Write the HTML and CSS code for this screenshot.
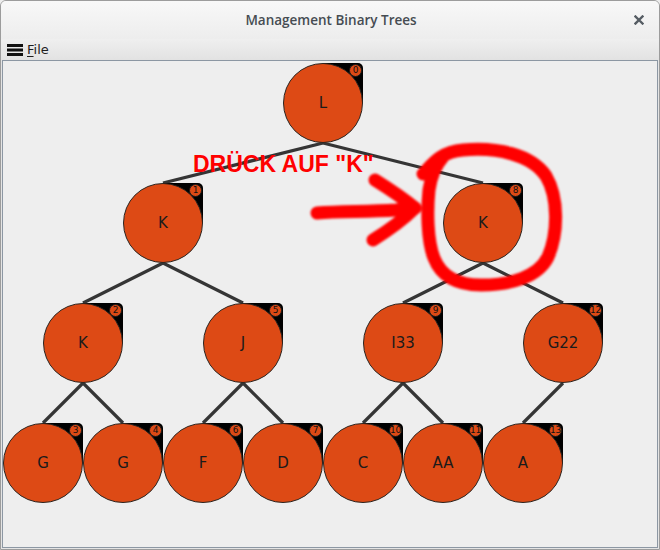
FILE: index.html
```html
<!DOCTYPE html>
<html>
<head>
<meta charset="utf-8">
<link rel="stylesheet" href="styles.css">
</head>
<body>
<div class="window">
  <div class="titlebar">
    <span class="title">Management Binary Trees</span>
    <svg class="close" width="10" height="10" viewBox="0 0 10 10"><path d="M1.5 1.5 L8.5 8.5 M8.5 1.5 L1.5 8.5" stroke="#555c63" stroke-width="2.4" stroke-linecap="square"/></svg>
  </div>
  <div class="menubar">
    <svg class="hamburger" width="16" height="12" viewBox="0 0 16 12"><rect x="0" y="0" width="16" height="3" fill="#111"/><rect x="0" y="4.5" width="16" height="3" fill="#111"/><rect x="0" y="9" width="16" height="3" fill="#111"/></svg>
    <span class="menu-item"><u>F</u>ile</span>
  </div>
  <div class="canvas">
    <svg class="edges" width="656" height="487" viewBox="2 61 656 487">
      <g stroke="#353535" stroke-width="3.2" stroke-linecap="butt">
        <line x1="322" y1="143" x2="162" y2="183"/>
        <line x1="322" y1="143" x2="482" y2="183"/>
        <line x1="162" y1="263" x2="82" y2="303"/>
        <line x1="162" y1="263" x2="242" y2="303"/>
        <line x1="482" y1="263" x2="402" y2="303"/>
        <line x1="482" y1="263" x2="562" y2="303"/>
        <line x1="82" y1="383" x2="42" y2="423"/>
        <line x1="82" y1="383" x2="122" y2="423"/>
        <line x1="242" y1="383" x2="202" y2="423"/>
        <line x1="242" y1="383" x2="282" y2="423"/>
        <line x1="402" y1="383" x2="362" y2="423"/>
        <line x1="402" y1="383" x2="442" y2="423"/>
        <line x1="562" y1="383" x2="522" y2="423"/>
      </g>
    </svg>

    <div class="node" style="left:280px;top:2px"><div class="circle">L</div><span class="badge">0</span></div>
    <div class="node" style="left:120px;top:122px"><div class="circle">K</div><span class="badge">1</span></div>
    <div class="node" style="left:440px;top:122px"><div class="circle">K</div><span class="badge">8</span></div>
    <div class="node" style="left:40px;top:242px"><div class="circle">K</div><span class="badge">2</span></div>
    <div class="node" style="left:200px;top:242px"><div class="circle">J</div><span class="badge">5</span></div>
    <div class="node" style="left:360px;top:242px"><div class="circle">I33</div><span class="badge">9</span></div>
    <div class="node" style="left:520px;top:242px"><div class="circle">G22</div><span class="badge">12</span></div>
    <div class="node" style="left:0px;top:362px"><div class="circle">G</div><span class="badge">3</span></div>
    <div class="node" style="left:80px;top:362px"><div class="circle">G</div><span class="badge">4</span></div>
    <div class="node" style="left:160px;top:362px"><div class="circle">F</div><span class="badge">6</span></div>
    <div class="node" style="left:240px;top:362px"><div class="circle">D</div><span class="badge">7</span></div>
    <div class="node" style="left:320px;top:362px"><div class="circle">C</div><span class="badge">10</span></div>
    <div class="node" style="left:400px;top:362px"><div class="circle">AA</div><span class="badge">11</span></div>
    <div class="node" style="left:480px;top:362px"><div class="circle">A</div><span class="badge">13</span></div>

    <div class="note">DRÜCK AUF "K"</div>
    <svg class="scribble" width="656" height="487" viewBox="2 61 656 487">
      <defs><filter id="soft" x="-10%" y="-10%" width="120%" height="120%"><feGaussianBlur stdDeviation="0.9"/></filter></defs>
      <g fill="none" stroke="#ff0000" stroke-width="13" stroke-linecap="round" stroke-linejoin="round" filter="url(#soft)">
        <path d="M316 213 C340 211, 365 212, 395 210 L414 208"/>
        <path d="M374 180 C390 190, 402 198, 414 208 C402 220, 388 230, 372 240"/>
        <path d="M422 174 C430 166, 438 152, 462 150 C495 147, 530 154, 545 176 C558 198, 557 234, 547 257 C537 277, 510 285, 480 285 C455 285, 440 276, 433 258 C426 240, 426 210, 428 190 C430 176, 434 166, 442 157"/>
      </g>
    </svg>
  </div>
</div>
</body>
</html>
```

FILE: styles.css
```css
* { box-sizing: border-box; }
html, body {
  margin: 0;
  padding: 0;
  background: #ededed;
}
.window {
  width: 660px;
  height: 550px;
  border: 1px solid #9c9c9c;
  border-radius: 6px 6px 0 0;
  background: #e4e4e4;
  display: flex;
  flex-direction: column;
  overflow: hidden;
}
.titlebar {
  height: 38px;
  flex: none;
  background: linear-gradient(#f8f8f8, #ededed);
  display: flex;
  align-items: center;
  justify-content: center;
  position: relative;
}
.title {
  font-family: "Open Sans", "DejaVu Sans", sans-serif;
  font-weight: 600;
  font-size: 13.5px;
  color: #464c52;
  margin-left: 2px;
}
.close {
  position: absolute;
  right: 15px;
  top: 14px;
}
.menubar {
  height: 21px;
  flex: none;
  background: linear-gradient(#efefef, #e2e2e2);
  display: flex;
  align-items: center;
  padding-left: 6px;
  gap: 4px;
}
.menu-item {
  font-family: "DejaVu Sans", sans-serif;
  font-size: 13px;
  color: #1e1e1e;
  line-height: 21px;
}
.menu-item u { text-decoration-thickness: 1px; text-underline-offset: 2px; }
.canvas {
  flex: 1;
  margin: 0 1px 1px 1px;
  border: 1px solid #8c97a3;
  background: #eeeeee;
  position: relative;
  overflow: hidden;
}
.edges, .scribble {
  position: absolute;
  left: 0;
  top: 0;
}
.scribble { z-index: 5; }
.node {
  position: absolute;
  width: 80px;
  height: 80px;
}
.node::before {
  content: "";
  position: absolute;
  left: 40px;
  top: 0;
  width: 40px;
  height: 40px;
  background: #000;
  border-top-right-radius: 5px;
}
.circle {
  position: absolute;
  left: 0;
  top: 0;
  width: 80px;
  height: 80px;
  border-radius: 50%;
  background: #dd4a15;
  border: 1.5px solid #2a2420;
  display: flex;
  align-items: center;
  justify-content: center;
  font-family: "DejaVu Sans", sans-serif;
  font-size: 15px;
  color: #1b1b1b;
}
.badge {
  position: absolute;
  left: 66px;
  top: 1px;
  width: 13px;
  height: 13px;
  border-radius: 50%;
  background: #dd4a15;
  border: 1px solid #1a1a1a;
  display: flex;
  align-items: center;
  justify-content: center;
  font-family: "DejaVu Sans", sans-serif;
  font-size: 9px;
  color: #111;
  letter-spacing: -0.2px;
  line-height: 1;
}
.note {
  position: absolute;
  left: 190px;
  top: 92px;
  font-family: "Liberation Sans", Arial, sans-serif;
  font-weight: bold;
  font-size: 23px;
  line-height: 23px;
  color: #ff0000;
  white-space: nowrap;
  z-index: 4;
}
```
